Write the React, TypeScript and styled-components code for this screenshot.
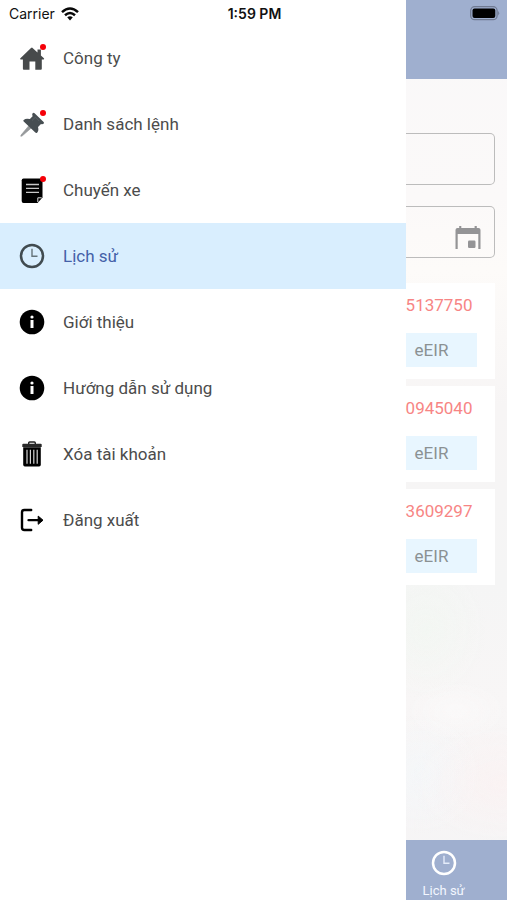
import React from "react";
import styled, { createGlobalStyle } from "styled-components";

const GlobalStyle = createGlobalStyle`
  *, *::before, *::after { box-sizing: border-box; }
  body {
    margin: 0;
    background: #fff;
    font-family: Roboto, "Noto Sans", sans-serif;
  }
  button, input { font: inherit; }
`;

const Screen = styled.div`
  position: relative;
  display: grid;
  grid-template-columns: 4fr 1fr;
  min-height: 100vh;
  overflow: hidden;
`;

const StatusBar = styled.header`
  position: absolute;
  inset: 0 0 auto 0;
  z-index: 2;
  display: grid;
  grid-template-columns: 1fr auto 1fr;
  align-items: center;
  height: 27px;
  padding: 0 7px 0 9px;
  font-family: Inter, sans-serif;
  font-size: 14px;
  color: #111;
`;

const Carrier = styled.div`
  display: flex;
  align-items: center;
  gap: 6px;
`;

const Clock = styled.time`
  font-weight: 600;
`;

const BatterySlot = styled.div`
  display: flex;
  justify-content: flex-end;
`;

const Drawer = styled.nav`
  padding-top: 25px;
  background: #fff;
`;

const Menu = styled.ul`
  margin: 0;
  padding: 0;
  list-style: none;
`;

const MenuButton = styled.button<{ $active?: boolean }>`
  display: flex;
  align-items: center;
  gap: 18px;
  width: 100%;
  height: 66px;
  padding: 0 19px;
  border: 0;
  background: ${(p) => (p.$active ? "#d9eefe" : "transparent")};
  color: ${(p) => (p.$active ? "#4460a8" : "#4c4c4c")};
  font-size: 17px;
  line-height: 24px;
  text-align: left;
  cursor: pointer;
`;

const IconBox = styled.span`
  position: relative;
  display: flex;
  width: 26px;
  height: 26px;
`;

const Dot = styled.span`
  position: absolute;
  top: -1px;
  right: -1px;
  width: 6px;
  height: 6px;
  border-radius: 50%;
  background: #f50008;
`;

const Page = styled.main`
  display: flex;
  flex-direction: column;
  min-width: 0;
  background:
    radial-gradient(ellipse 60px 70px at 20% 70%, rgba(240, 248, 240, 0.5), transparent),
    radial-gradient(ellipse 50px 30px at 50% 79%, rgba(253, 252, 252, 0.5), transparent),
    radial-gradient(ellipse 90px 60px at 95% 87%, rgba(253, 240, 240, 0.5), transparent),
    radial-gradient(ellipse 60px 60px at 15% 86%, rgba(243, 248, 251, 0.6), transparent),
    linear-gradient(#f9f8f9 0, #fbf9f9 22%, #fdfbf9 30%, #f7f5f5 45%, #f5f5f5 65%, #f8f6f6 78%, #f5f4f5 100%);
`;

const TitleBar = styled.div`
  height: 79px;
  background: #9fafcf;
`;

const Filters = styled.div`
  display: grid;
  grid-template-columns: minmax(0, 1fr);
  gap: 21px;
  padding: 54px 12px 25px 0;
`;

const Field = styled.div`
  display: flex;
  align-items: center;
  height: 52px;
  padding-right: 13px;
  border: 1px solid #bcbcbc;
  border-left: 0;
  border-radius: 0 5px 5px 0;
`;

const FieldInput = styled.input`
  flex: 1;
  width: 0;
  min-width: 0;
  height: 100%;
  border: 0;
  outline: 0;
  background: transparent;
`;

const IconButton = styled.button`
  display: flex;
  padding: 11px 0 0;
  border: 0;
  background: transparent;
`;

const Cards = styled.div`
  display: grid;
  gap: 7px;
  padding-right: 12px;
`;

const Card = styled.article`
  display: flex;
  flex-direction: column;
  align-items: flex-start;
  gap: 16px;
  height: 96px;
  padding: 10px 18px 0 0;
  background: #fff;
`;

const CardNumber = styled.span`
  font-size: 17px;
  line-height: 24px;
  color: #f78584;
`;

const CardAction = styled.button`
  width: 100%;
  height: 34px;
  padding: 0 9px;
  border: 0;
  background: #e8f6ff;
  color: #8b9193;
  font-size: 17px;
  text-align: left;
`;

const TabBar = styled.nav`
  display: flex;
  height: 60px;
  margin-top: auto;
  background: #9fafcf;
`;

const Tab = styled.button`
  display: flex;
  flex-direction: column;
  align-items: center;
  gap: 6px;
  width: 76px;
  padding: 10px 0 0;
  border: 0;
  background: transparent;
  color: #f3f7ff;
  font-size: 13px;
  line-height: 18px;
`;

const Svg = ({ children }: { children: React.ReactNode }) => (
  <svg width="26" height="26" viewBox="0 0 26 26" aria-hidden="true">
    {children}
  </svg>
);

const HomeIcon = () => (
  <Svg>
    <path
      d="M13 2.5 18.5 7.4V4.6h3.4v5.8l3 2.8q.8 1-.3 1.3h-1.8v9.3q0 .9-.9.9h-5.6v-8.2h-5.8v8.2H4.8q-.9 0-.9-.9v-9.3H1.7q-1.2-.4-.3-1.3L12 2.9q.5-.4 1-.4Z"
      fill="#474a4b"
    />
  </Svg>
);

const PinIcon = () => (
  <Svg>
    <path d="m10 14.5 2.4 2.4L3 25.1l-1.2.2.2-1.2Z" fill="#96999b" stroke="#96999b" strokeWidth="0.6" />
    <path
      d="M13.6 2.2q1-.9 2 .1l9 8.6q.9 1.2-.1 1.9-1 .8-2.5.2l-3 3q1.1 3.6-.9 5.7-.9.7-1.8-.1L4.7 10.6q-.9-.9 0-1.7 2.3-2 6.2-.8l2.7-2.9q-.8-1.8 0-3Z"
      fill="#474e52"
    />
    <path d="m13 9.5 3.4-3.3 3.9 3.9" fill="none" stroke="#596065" strokeWidth="1" />
  </Svg>
);

const NoteIcon = () => (
  <Svg>
    <path
      d="M4.5 1.5h17q2 0 2 2v17L18.5 26h-14q-1.8 0-1.8-2V3.3q0-1.8 1.8-1.8Z"
      fill="#000"
    />
    <path d="M18.8 25v-4.2h3.9" fill="none" stroke="#ddd" strokeWidth="1" />
    <path d="M7 7.5h13M7 11.4h13M7 15.3h13" stroke="#c8c8c8" strokeWidth="1.3" />
  </Svg>
);

const HistoryIcon = ({ color, hand }: { color: string; hand: string }) => (
  <Svg>
    <circle cx="13" cy="13" r="11" fill="none" stroke={color} strokeWidth="2.5" />
    <path d="M13 5.8v7.4h5.5" fill="none" stroke={hand} strokeWidth="1.4" />
  </Svg>
);

const InfoIcon = () => (
  <Svg>
    <circle cx="13" cy="13" r="12.3" fill="#000" />
    <path d="M11.5 11h3v8h-3Z" fill="#fff" />
    <circle cx="13" cy="8" r="1.6" fill="#fff" />
  </Svg>
);

const TrashIcon = () => (
  <Svg>
    <path d="M9.7 3V2q0-1 1-1h4.6q1 0 1 1v1" fill="none" stroke="#222" strokeWidth="1.4" />
    <path d="M4.3 2.8h17.4q1 0 1 1V6H3.3V3.8q0-1 1-1Z" fill="#292929" />
    <path d="M4.2 6.2h17.6v17.5q0 1.7-1.7 1.7H5.9q-1.7 0-1.7-1.7Z" fill="#000" />
    <path d="M8 8.7v14M11.4 8.7v14M14.8 8.7v14M18.2 8.7v14" stroke="#d4d4d4" strokeWidth="1.2" />
  </Svg>
);

const LogoutIcon = () => (
  <Svg>
    <path
      d="M12.2 3H5.4Q3 3 3 5.2v15.6Q3 23 5.4 23h6.8"
      fill="none"
      stroke="#000"
      strokeWidth="2.4"
      strokeLinecap="round"
    />
    <path d="M9.5 13.2H21" stroke="#000" strokeWidth="2.3" strokeLinecap="round" />
    <path d="M19.2 9.1 24 13.2l-4.8 4.1Z" fill="#000" stroke="#000" strokeLinejoin="round" />
  </Svg>
);

const WifiIcon = () => (
  <svg width="18" height="14" viewBox="0 0 18 14" aria-label="Wi-Fi">
    <g fill="none" stroke="#080808" strokeWidth="2.5">
      <path d="M1 5.2Q9-2.2 17 5.2" />
      <path d="M4 8.3Q9 3.8 14 8.3" />
    </g>
    <path d="M6.2 10.3Q9 8 11.8 10.3L9 13.4Z" fill="#080808" />
  </svg>
);

const BatteryIcon = () => (
  <svg width="30" height="15" viewBox="0 0 30 15" aria-label="Battery">
    <rect x="0.7" y="0.7" width="26.4" height="13" rx="4" fill="none" stroke="#6f7a92" strokeWidth="1.3" />
    <rect x="2.5" y="2.5" width="22.8" height="9.4" rx="2" fill="#000" />
    <path d="M28.2 5q2 2.2 0 4.4Z" fill="#6f7a92" />
  </svg>
);

const CalendarIcon = () => (
  <svg width="26" height="24" viewBox="0 0 26 24" aria-hidden="true">
    <path
      d="M4.2 0h2.1v2h13.3V0h2.2v2h1.7Q25.5 2 25.5 4v19h-2.2V8H2.7v15H.5V4q0-2 2-2h1.7Z"
      fill="#949496"
    />
    <rect x="13" y="14.5" width="7.5" height="7.5" rx="1.2" fill="#949496" />
  </svg>
);

const menuItems = [
  { label: "Công ty", icon: <HomeIcon />, dot: true },
  { label: "Danh sách lệnh", icon: <PinIcon />, dot: true },
  { label: "Chuyến xe", icon: <NoteIcon />, dot: true },
  { label: "Lịch sử", icon: <HistoryIcon color="#414b50" hand="#66747b" />, active: true },
  { label: "Giới thiệu", icon: <InfoIcon /> },
  { label: "Hướng dẫn sử dụng", icon: <InfoIcon /> },
  { label: "Xóa tài khoản", icon: <TrashIcon /> },
  { label: "Đăng xuất", icon: <LogoutIcon /> },
];

const records = ["5137750", "0945040", "3609297"];

export default function App() {
  return (
    <>
      <GlobalStyle />
      <Screen>
        <StatusBar>
          <Carrier>
            Carrier
            <WifiIcon />
          </Carrier>
          <Clock>1:59 PM</Clock>
          <BatterySlot>
            <BatteryIcon />
          </BatterySlot>
        </StatusBar>
        <Drawer>
          <Menu>
            {menuItems.map((item) => (
              <li key={item.label}>
                <MenuButton $active={item.active} aria-current={item.active ? "page" : undefined}>
                  <IconBox>
                    {item.icon}
                    {item.dot && <Dot />}
                  </IconBox>
                  {item.label}
                </MenuButton>
              </li>
            ))}
          </Menu>
        </Drawer>
        <Page>
          <TitleBar />
          <Filters>
            <Field>
              <FieldInput type="text" aria-label="Tìm kiếm" />
            </Field>
            <Field>
              <FieldInput type="text" aria-label="Ngày" />
              <IconButton aria-label="Chọn ngày">
                <CalendarIcon />
              </IconButton>
            </Field>
          </Filters>
          <Cards>
            {records.map((number) => (
              <Card key={number}>
                <CardNumber>{number}</CardNumber>
                <CardAction>eEIR</CardAction>
              </Card>
            ))}
          </Cards>
          <TabBar>
            <Tab>
              <HistoryIcon color="#fff" hand="#e4ecfa" />
              Lịch sử
            </Tab>
          </TabBar>
        </Page>
      </Screen>
    </>
  );
}
